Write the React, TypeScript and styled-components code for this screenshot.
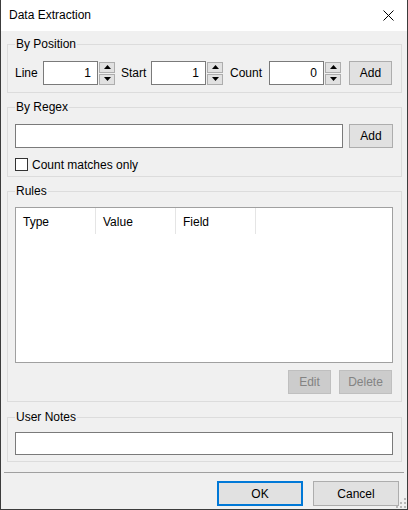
import styled, { createGlobalStyle } from 'styled-components';

const GlobalStyle = createGlobalStyle`
    html, body {
        margin: 0;
        padding: 0;
        background: #ffffff;
    }
    * {
        box-sizing: border-box;
    }
`;

const Window = styled.div`
    position: relative;
    width: 408px;
    height: 510px;
    display: flex;
    flex-direction: column;
    background: #f0f0f0;
    border: 1px solid #3c3c3c;
    border-top: none;
    font-family: 'Liberation Sans', Arial, sans-serif;
    font-size: 12px;
    color: #000000;
`;

const TitleBar = styled.div`
    height: 31px;
    flex: none;
    display: flex;
    align-items: center;
    justify-content: space-between;
    padding: 0 13px 1px 8px;
    background: #ffffff;
`;

const Title = styled.span`
    font-size: 12px;
`;

const Body = styled.div`
    flex: 1;
    display: flex;
    flex-direction: column;
    padding: 5px 5px 0 6px;

    & > * {
        flex-shrink: 0;
    }
`;

const Group = styled.fieldset<{ $pad: string; $mt: number }>`
    margin: ${(p) => p.$mt}px 0 0 0;
    min-width: 0;
    border: 1px solid #dcdcdc;
    padding: ${(p) => p.$pad};
`;

const Legend = styled.legend`
    padding: 0 1px;
    line-height: 16px;
    height: 16px;
`;

const Row = styled.div`
    display: flex;
    align-items: center;
`;

const Label = styled.span<{ $w: number }>`
    width: ${(p) => p.$w}px;
    flex: none;
`;

const NumberBox = styled.input`
    width: 55px;
    height: 24px;
    border: 1px solid #7a7a7a;
    background: #ffffff;
    text-align: right;
    padding: 0 6px 0 2px;
    font: inherit;
    outline: none;
`;

const Spin = styled.div<{ $mr: number }>`
    display: flex;
    flex-direction: column;
    gap: 1px;
    margin: 0 ${(p) => p.$mr}px 0 1px;
`;

const SpinHalf = styled.div`
    width: 16px;
    height: 11px;
    border: 1px solid #adadad;
    background: #e1e1e1;
    display: flex;
    align-items: center;
    justify-content: center;
`;

const Button = styled.button<{ $w: number; $ml?: number }>`
    width: ${(p) => p.$w}px;
    height: 24px;
    margin-left: ${(p) => p.$ml ?? 0}px;
    border: 1px solid #adadad;
    background: #e1e1e1;
    font: inherit;
    color: #000000;
    padding: 0;

    &:disabled {
        background: #cccccc;
        border-color: #bfbfbf;
        color: #838383;
    }
`;

const TextBox = styled.input<{ $h: number }>`
    flex: 1;
    min-width: 0;
    height: ${(p) => p.$h}px;
    border: 1px solid #7a7a7a;
    background: #ffffff;
    font: inherit;
    outline: none;
`;

const CheckRow = styled.label`
    display: flex;
    align-items: center;
    gap: 4px;
    height: 13px;
    margin-top: 10px;
`;

const CheckBox = styled.span`
    width: 13px;
    height: 13px;
    border: 1px solid #333333;
    background: #ffffff;
`;

const ListView = styled.div`
    height: 156px;
    border: 1px solid #a0a0a0;
    background: #ffffff;
`;

const HeaderRow = styled.div`
    display: flex;
    height: 26px;
`;

const HeaderCell = styled.div`
    width: 80px;
    padding: 2px 0 0 7px;
    display: flex;
    align-items: center;
    border-right: 1px solid #e5e5e5;
`;

const ButtonRow = styled.div`
    display: flex;
    justify-content: flex-end;
    gap: 8px;
    margin-top: 7px;
    padding-right: 1px;
`;

const Separator = styled.div`
    height: 1px;
    background: #a0a0a0;
    margin: 10px -2px 0 -3px;
`;

const Footer = styled.div`
    display: flex;
    justify-content: flex-end;
    gap: 10px;
    margin-top: 8px;
    padding-right: 3px;
`;

const DialogButton = styled.button<{ $default?: boolean }>`
    width: 86px;
    height: 25px;
    font: inherit;
    color: #000000;
    background: #e1e1e1;
    border: ${(p) => (p.$default ? '2px solid #0078d7' : '1px solid #adadad')};
    padding: 0;
`;

const Grip = styled.svg`
    position: absolute;
    right: 1px;
    bottom: 1px;
`;

const UpArrow = () => (
    <svg width="7" height="4" viewBox="0 0 7 4">
        <path d="M3.5 0 L7 4 L0 4 Z" fill="#000" />
    </svg>
);

const DownArrow = () => (
    <svg width="7" height="4" viewBox="0 0 7 4">
        <path d="M0 0 L7 0 L3.5 4 Z" fill="#000" />
    </svg>
);

function Spinner({ value, gapAfter }: { value: string; gapAfter: number }) {
    return (
        <>
            <NumberBox defaultValue={value} />
            <Spin $mr={gapAfter}>
                <SpinHalf>
                    <UpArrow />
                </SpinHalf>
                <SpinHalf>
                    <DownArrow />
                </SpinHalf>
            </Spin>
        </>
    );
}

export default function App() {
    return (
        <>
            <GlobalStyle />
            <Window>
                <TitleBar>
                    <Title>Data Extraction</Title>
                    <svg width="11" height="11" viewBox="0 0 11 11">
                        <path d="M0.5 0.5 L10.5 10.5 M10.5 0.5 L0.5 10.5" stroke="#000" strokeWidth="1" />
                    </svg>
                </TitleBar>
                <Body>
                    <Group $mt={0} $pad="9px 9px 7px 7px">
                        <Legend>By Position</Legend>
                        <Row>
                            <Label $w={28}>Line</Label>
                            <Spinner value="1" gapAfter={6} />
                            <Label $w={30}>Start</Label>
                            <Spinner value="1" gapAfter={7} />
                            <Label $w={39}>Count</Label>
                            <Spinner value="0" gapAfter={8} />
                            <Button $w={43}>Add</Button>
                        </Row>
                    </Group>
                    <Group $mt={6} $pad="9px 8px 5px 7px">
                        <Legend>By Regex</Legend>
                        <Row>
                            <TextBox $h={24} />
                            <Button $w={44} $ml={6}>Add</Button>
                        </Row>
                        <CheckRow>
                            <CheckBox />
                            Count matches only
                        </CheckRow>
                    </Group>
                    <Group $mt={6} $pad="8px 8px 7px 7px">
                        <Legend>Rules</Legend>
                        <ListView>
                            <HeaderRow>
                                <HeaderCell>Type</HeaderCell>
                                <HeaderCell>Value</HeaderCell>
                                <HeaderCell>Field</HeaderCell>
                            </HeaderRow>
                        </ListView>
                        <ButtonRow>
                            <Button $w={43} disabled>Edit</Button>
                            <Button $w={53} disabled>Delete</Button>
                        </ButtonRow>
                    </Group>
                    <Group $mt={7} $pad="7px 8px 6px 7px">
                        <Legend>User Notes</Legend>
                        <Row>
                            <TextBox $h={23} />
                        </Row>
                    </Group>
                    <Separator />
                    <Footer>
                        <DialogButton $default>OK</DialogButton>
                        <DialogButton>Cancel</DialogButton>
                    </Footer>
                </Body>
                <Grip width="10" height="10" viewBox="0 0 10 10">
                    <g fill="#b8b8b8">
                        <rect x="8" y="0" width="2" height="2" />
                        <rect x="4" y="4" width="2" height="2" />
                        <rect x="8" y="4" width="2" height="2" />
                        <rect x="0" y="8" width="2" height="2" />
                        <rect x="4" y="8" width="2" height="2" />
                        <rect x="8" y="8" width="2" height="2" />
                    </g>
                </Grip>
            </Window>
        </>
    );
}
